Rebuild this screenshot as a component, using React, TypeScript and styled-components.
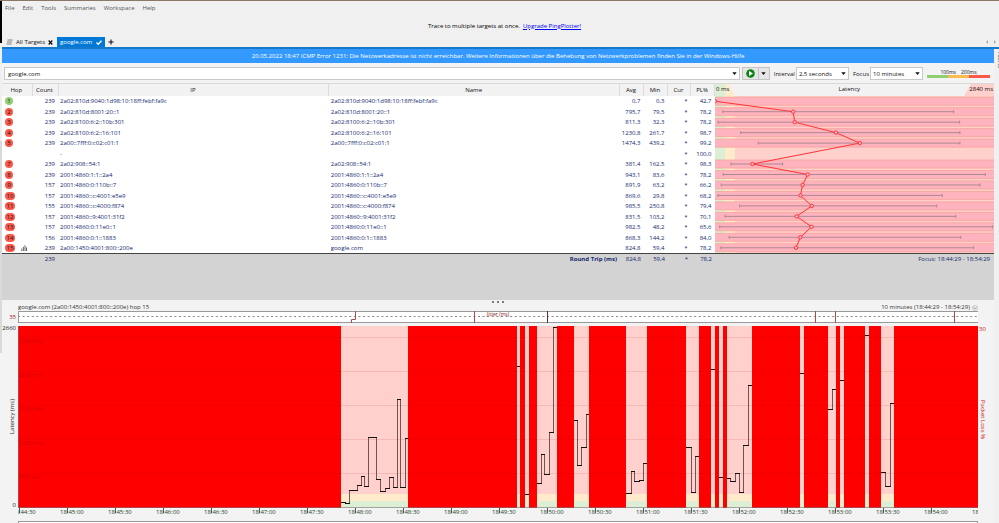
import React from "react";
import styled, { createGlobalStyle } from "styled-components";

const GlobalStyle = createGlobalStyle`
  *, *::before, *::after { box-sizing: border-box; }
  html, body { margin: 0; padding: 0; }
  body {
    background: #f3f3f3;
    color: #111;
    font: 6px/8px "Open Sans", "Noto Sans", sans-serif;
    overflow: hidden;
  }
  button, input, select { font: inherit; color: inherit; margin: 0; }
`;

/* ---------- data ---------- */

type Hop = {
  hop: number;
  count?: number;
  ip: string;
  name: string;
  avg?: number;
  min?: number;
  max?: number;
  loss: number;
};

const hops: Hop[] = [
  { hop: 1, count: 239, ip: "2a02:810d:9040:1d98:10:18ff:febf:fa9c", name: "2a02:810d:9040:1d98:10:18ff:febf:fa9c", avg: 0.7, min: 0.3, loss: 42.7 },
  { hop: 2, count: 239, ip: "2a02:810d:8001:20::1", name: "2a02:810d:8001:20::1", avg: 795.7, min: 79.5, max: 2429, loss: 78.2 },
  { hop: 3, count: 239, ip: "2a02:8100:6:2::10b:301", name: "2a02:8100:6:2::10b:301", avg: 811.3, min: 32.3, max: 2490, loss: 78.2 },
  { hop: 4, count: 239, ip: "2a02:8100:6:2::16:101", name: "2a02:8100:6:2::16:101", avg: 1230.8, min: 261.7, max: 2493, loss: 98.7 },
  { hop: 5, count: 239, ip: "2a00::7fff:0:c02:c01:1", name: "2a00::7fff:0:c02:c01:1", avg: 1474.3, min: 439.2, max: 2493, loss: 99.2 },
  { hop: 6, ip: "-", name: "", loss: 100 },
  { hop: 7, count: 239, ip: "2a02:908::54:1", name: "2a02:908::54:1", avg: 381.4, min: 162.5, max: 688, loss: 98.3 },
  { hop: 8, count: 239, ip: "2001:4860:1:1::2a4", name: "2001:4860:1:1::2a4", avg: 943.1, min: 83.6, max: 2751, loss: 78.2 },
  { hop: 9, count: 157, ip: "2001:4860:0:110b::7", name: "2001:4860:0:110b::7", avg: 891.9, min: 63.2, max: 2697, loss: 66.2 },
  { hop: 10, count: 157, ip: "2001:4860::c:4001:e5e9", name: "2001:4860::c:4001:e5e9", avg: 869.6, min: 29.8, max: 2313, loss: 68.2 },
  { hop: 11, count: 155, ip: "2001:4860::c:4000:f874", name: "2001:4860::c:4000:f874", avg: 985.5, min: 250.8, max: 2256, loss: 79.4 },
  { hop: 12, count: 157, ip: "2001:4860::9:4001:31f2", name: "2001:4860::9:4001:31f2", avg: 831.5, min: 103.2, max: 2450, loss: 70.1 },
  { hop: 13, count: 157, ip: "2001:4860:0:11e0::1", name: "2001:4860:0:11e0::1", avg: 982.5, min: 48.2, max: 2826, loss: 65.6 },
  { hop: 14, count: 156, ip: "2001:4860:0:1::1883", name: "2001:4860:0:1::1883", avg: 868.3, min: 144.2, max: 2501, loss: 84.0 },
  { hop: 15, count: 239, ip: "2a00:1450:4001:800::200e", name: "google.com", avg: 824.8, min: 59.4, max: 2633, loss: 78.2 },
];

const fmt = (n?: number) => (n === undefined ? "" : n.toFixed(1).replace(".", ","));

/* Each run of answered pings: step starts [x, y], closed by the run's end x. */
const runs: { end: number; steps: [number, number][] }[] = [
  { end: 390, steps: [[323, 176], [327, 177], [331, 164], [339, 159], [343, 150], [346, 160], [350, 111], [358, 153], [362, 165], [367, 162], [371, 151], [375, 161], [379, 73], [382, 161], [387, 112]] },
  { end: 502, steps: [[499, 40]] },
  { end: 511, steps: [[507, 168]] },
  { end: 539, steps: [[519, 157], [523, 128], [526, 148], [531, 106], [535, 1]] },
  { end: 571, steps: [[556, 94], [559, 139], [563, 121], [568, 88]] },
  { end: 629, steps: [[608, 167], [613, 145], [616, 155], [621, 154], [625, 137]] },
  { end: 681, steps: [[668, 121], [673, 166], [677, 130]] },
  { end: 697, steps: [[693, 43]] },
  { end: 705, steps: [[701, 151]] },
  { end: 734, steps: [[709, 152], [712, 155], [717, 147], [721, 166], [725, 119], [730, 59]] },
  { end: 786, steps: [[782, 47]] },
  { end: 818, steps: [[810, 83], [814, 63]] },
  { end: 826, steps: [[822, 54]] },
  { end: 851, steps: [[847, 9]] },
  { end: 876, steps: [[863, 146], [867, 160], [872, 77]] },
];

const times = Array.from({ length: 21 }, (_, i) => {
  const s = 44 * 60 + 30 + i * 30;
  return `18:${Math.floor(s / 60)}:${s % 60 === 0 ? "00" : "30"}`;
});

/* ---------- frame ---------- */

const Shell = styled.div`
  display: flex;
  flex-direction: column;
  height: 100vh;
  border-top: 1px solid #8c7866;
`;
const Columns = styled.div`
  display: flex;
  flex: 1;
  min-height: 0;
`;
const LeftEdge = styled.div`
  width: 2px;
  flex: none;
  background: linear-gradient(#000 42px, #f0f0f0 42px 140px, #dadada 140px 352px, #f3f3f3 352px);
`;
const Main = styled.main`
  flex: 1;
  min-width: 0;
  display: flex;
  flex-direction: column;
`;

const MenuBar = styled.nav`
  display: flex;
  gap: 8px;
  height: 13px;
  padding-left: 3px;
  background: #f0f0f0;
`;
const MenuItem = styled.button`
  border: 0;
  padding: 0;
  background: none;
  color: #555;
`;
const Promo = styled.div`
  height: 23px;
  display: flex;
  align-items: center;
  justify-content: center;
  gap: 3px;
  padding-left: 8px;
  background: #f0f0f0;
  color: #000;
  a { color: #0000ff; text-decoration: underline; }
`;
const TabBar = styled.div`
  height: 10px;
  display: flex;
  align-items: stretch;
  padding-left: 1px;
  background: #f0f0f0;
`;
const Tab = styled.button<{ $active?: boolean }>`
  display: flex;
  align-items: center;
  gap: ${(p) => (p.$active ? "4px" : "3px")};
  border: 0;
  padding: 0 ${(p) => (p.$active ? "3px" : "4px")} 0 3px;
  white-space: nowrap;
  background: ${(p) => (p.$active ? "#0078d7" : "transparent")};
  color: ${(p) => (p.$active ? "#fff" : "#111")};
`;
const IconButton = styled.button`
  border: 0;
  padding: 0;
  background: none;
  display: flex;
  align-items: center;
  justify-content: center;
  color: #111;
  width: 12px;
`;
const TabScroll = styled.div`
  margin-left: auto;
  display: flex;
  button { width: 8px; color: #aaa; }
`;
const Work = styled.div`
  display: flex;
  flex: 1;
  min-height: 0;
  border-top: 2px solid #1777c9;
`;
const Content = styled.div`
  flex: 1;
  min-width: 0;
  display: flex;
  flex-direction: column;
`;
const RightEdge = styled.aside`
  width: 5px;
  flex: none;
  padding: 3px 0 0 2px;
  overflow: hidden;
  background: #f0f0f0;
`;
const SideTab = styled.button`
  border: 0;
  padding: 0;
  background: none;
  writing-mode: vertical-rl;
  color: #333;
`;
const Banner = styled.div`
  height: 14px;
  line-height: 14px;
  text-align: center;
  white-space: nowrap;
  background: #3399ff;
  color: #fff;
`;

/* ---------- toolbar ---------- */

const Toolbar = styled.div`
  height: 21px;
  display: flex;
  align-items: center;
  padding: 1px 4px 0 2px;
  border-bottom: 1px solid #d8d8d8;
  background: #f3f3f3;
`;
const Combo = styled.div<{ $grow?: boolean }>`
  position: relative;
  flex: ${(p) => (p.$grow ? "1" : "none")};
  width: 53px;
  height: 13px;
  input, select {
    appearance: none;
    width: 100%;
    height: 100%;
    border: 1px solid #c8c8c8;
    border-radius: 0;
    background: #fff;
    padding: 0 3px;
    outline: none;
    display: block;
    color: #111;
  }
  select { padding: 0 2px; }
`;
const ComboArrow = styled.span`
  position: absolute;
  right: 3px;
  top: 0;
  bottom: 0;
  display: flex;
  align-items: center;
  pointer-events: none;
`;
const SplitButton = styled.div`
  display: flex;
  height: 13px;
  margin: 0 4px 0 2px;
  border: 1px solid #c4c4c4;
  background: #e6e6e6;
  button + button { border-left: 1px solid #c4c4c4; width: 11px; }
  button { width: 15px; }
`;
const FieldLabel = styled.label`
  margin: 0 1px 0 0;
  ${Combo} + & { margin-left: 4px; }
`;
const Legend = styled.div`
  width: 63px;
  margin-left: 4px;
  line-height: 6px;
`;
const LegendLabels = styled.div`
  display: flex;
  justify-content: center;
  gap: 5px;
  font-size: 5px;
`;
const LegendBar = styled.div`
  height: 3px;
  background: linear-gradient(90deg, #8fcf70 33%, #fdbb4e 33% 67%, #fb5849 67%);
`;

/* ---------- trace table ---------- */

const Trace = styled.section`
  display: grid;
  grid-template-columns: 713fr 279fr;
  background: #fff;
`;
const HopTable = styled.table`
  width: 100%;
  border-collapse: collapse;
  table-layout: fixed;
  color: #14286e;
  th, td {
    padding: 0 3px 0 2px;
    line-height: 8px;
    white-space: nowrap;
    overflow: hidden;
  }
  thead tr { height: 12px; background: #f2f2f2; }
  thead th { font-weight: 400; color: #111; border-right: 1px solid #dcdcdc; }
`;
const Col = styled.col<{ $w?: string }>`
  width: ${(p) => p.$w ?? "auto"};
`;
const BodyRow = styled.tr<{ $tall?: boolean }>`
  height: ${(p) => (p.$tall ? "11px" : "10px")};
`;
const Num = styled.td`
  text-align: right;
`;
const RoundTrip = styled.th`
  text-align: right;
  font-weight: 700;
`;
const HopCell = styled.div`
  display: flex;
  align-items: center;
  gap: 6px;
  height: 10px;
  padding-left: 1px;
`;
const Badge = styled.span<{ $good: boolean; $wide: boolean }>`
  width: ${(p) => (p.$wide ? "10px" : "8px")};
  height: 8px;
  border-radius: 4px;
  text-align: center;
  background: ${(p) => (p.$good ? "#8fcf70" : "#fb5849")};
  color: #10132e;
`;
const LatencyPane = styled.div`
  display: flex;
  flex-direction: column;
  min-width: 0;
`;
const LatencyHead = styled.div`
  position: relative;
  height: 12px;
  display: flex;
  justify-content: space-between;
  padding: 1px 1px 0;
  background: #f2f2f2;
  line-height: 8px;
  span { position: relative; }
`;
const HeadShape = styled.svg<{ $right?: boolean }>`
  position: absolute;
  top: 0;
  ${(p) => (p.$right ? "right: 0;" : "left: 0;")}
`;
const LatencySvg = styled.svg`
  display: block;
  width: 100%;
  height: 157px;
`;
const Summary = styled.div`
  height: 47px;
  border-top: 1px solid #444;
  background: #d3d3d3;
  color: #14286e;
  display: grid;
  grid-template-columns: 713fr 279fr;
  align-items: start;
`;
const FocusRange = styled.div`
  text-align: right;
  line-height: 10px;
  padding-right: 4px;
`;

/* ---------- timeline ---------- */

const Splitter = styled.div`
  height: 4px;
  display: flex;
  align-items: center;
  justify-content: center;
  gap: 3px;
  i { width: 2px; height: 2px; background: #555; border-radius: 1px; }
`;
const Timeline = styled.section`
  display: grid;
  grid-template-columns: 16px minmax(0, 1fr) 16px;
  grid-template-rows: 7px 12px 3px 182px 9px;
`;
const TitleRow = styled.div`
  grid-column: 2;
  display: flex;
  justify-content: space-between;
  align-items: center;
  line-height: 7px;
  color: #333;
`;
const Period = styled.button`
  border: 0;
  padding: 0;
  background: none;
  display: flex;
  align-items: center;
  gap: 2px;
  line-height: 7px;
`;
const JitterScale = styled.div`
  grid-column: 1;
  grid-row: 2;
  text-align: right;
  padding: 2px 2px 0 0;
  color: #a01818;
`;
const Jitter = styled.div`
  grid-column: 2;
  grid-row: 2;
  position: relative;
  background: #fff;
  svg { display: block; width: 100%; height: 12px; }
`;
const JitterLabel = styled.span`
  position: absolute;
  left: 0;
  right: 0;
  top: 0;
  text-align: center;
  line-height: 7px;
  font-size: 5px;
  color: #881111;
`;
const LatencyScale = styled.div`
  grid-column: 1;
  grid-row: 4;
  display: flex;
  flex-direction: column;
  justify-content: space-between;
  align-items: flex-end;
  padding-right: 2px;
  line-height: 5px;
  color: #222;
`;
const AxisTitle = styled.span<{ $up?: boolean }>`
  writing-mode: vertical-rl;
  line-height: 8px;
  white-space: nowrap;
  ${(p) => p.$up && "transform: rotate(180deg);"}
`;
const LossScale = styled.div`
  grid-column: 3;
  grid-row: 4;
  display: flex;
  flex-direction: column;
  justify-content: space-between;
  align-items: flex-start;
  padding-left: 1px;
  line-height: 6px;
  color: #d01010;
  &::after { content: ""; }
`;
const Plot = styled.div`
  grid-column: 2;
  grid-row: 4;
  position: relative;
  svg { display: block; width: 100%; height: 182px; }
`;
const GridLabels = styled.div`
  position: absolute;
  inset: 11px auto auto 1px;
  display: grid;
  grid-auto-rows: 34px;
  color: #d40000;
`;
const TimeAxis = styled.div`
  grid-column: 2;
  grid-row: 5;
  overflow: hidden;
`;
const TimeLabels = styled.div`
  display: flex;
  margin-left: -6px;
  margin-right: 6px;
`;
const TimeLabel = styled.time`
  flex: 0 0 5%;
  position: relative;
  line-height: 8px;
  color: #1f3f26;
  &::before {
    content: "";
    position: absolute;
    left: 7px;
    top: 0;
    height: 5px;
    border-left: 1px solid #555;
  }
`;
const NextPanel = styled.div`
  flex: 1;
  margin: 4px 16px 0;
  border: 1px solid #999;
  border-bottom: 0;
  background: #fff;
`;

/* ---------- parts ---------- */

const Caret = () => (
  <svg width="5" height="3" viewBox="0 0 5 3" aria-hidden="true">
    <path d="M0.3 0.2h4.4L2.5 3z" fill="#111" />
  </svg>
);

const columns = (
  <colgroup>
    <Col $w="30px" />
    <Col $w="26px" />
    <Col $w="38%" />
    <Col />
    <Col $w="24px" />
    <Col $w="24px" />
    <Col $w="23px" />
    <Col $w="24px" />
  </colgroup>
);

function Hops() {
  return (
    <HopTable>
      {columns}
      <thead>
        <tr>
          {["Hop", "Count", "IP", "Name", "Avg", "Min", "Cur", "PL%"].map((h) => (
            <th key={h} scope="col">{h}</th>
          ))}
        </tr>
      </thead>
      <tbody>
        {hops.map((h, i) => (
          <BodyRow key={h.hop} $tall={i % 2 === 1}>
            <td>
              {h.count !== undefined && (
                <HopCell>
                  <Badge $good={h.hop === 1} $wide={h.hop > 9}>{h.hop}</Badge>
                  {h.hop === 15 && (
                    <svg width="6" height="6" viewBox="0 0 6 6" aria-hidden="true">
                      <path d="M0.8 6V3.6M2.4 6V1.8M4 6V0.3M5.5 6V2.4" stroke="#555" strokeWidth="0.9" />
                    </svg>
                  )}
                </HopCell>
              )}
            </td>
            <Num>{h.count}</Num>
            <td>{h.ip}</td>
            <td>{h.name}</td>
            <Num>{fmt(h.avg)}</Num>
            <Num>{fmt(h.min)}</Num>
            <Num>*</Num>
            <Num>{fmt(h.loss)}</Num>
          </BodyRow>
        ))}
      </tbody>
    </HopTable>
  );
}

const msX = (ms: number) => (ms / 2840) * 279;
const rowY = (i: number) => ((i + 0.5) * 157) / 15;

function LatencyGraph() {
  const answered = hops.map((h, i) => ({ h, y: rowY(i) })).filter(({ h }) => h.avg !== undefined);
  return (
    <LatencyPane>
      <LatencyHead>
        <HeadShape width="20" height="12" viewBox="0 0 20 12" aria-hidden="true">
          <path d="M0 0H10V12H0z" fill="#dcefd4" />
          <path d="M10 0H13L20 12H10z" fill="#ffeacb" />
        </HeadShape>
        <HeadShape $right width="30" height="12" viewBox="0 0 30 12" aria-hidden="true">
          <path d="M7 0H30V12H0z" fill="#ffd0cc" />
        </HeadShape>
        <span>0 ms</span>
        <span>Latency</span>
        <span>2840 ms</span>
      </LatencyHead>
      <LatencySvg viewBox="0 0 279 157" preserveAspectRatio="none" role="img" aria-label="Latency per hop">
        <rect width="279" height="157" fill="#ffd0cc" />
        <rect width="10" height="157" fill="#dcefd4" />
        <rect x="10" width="10" height="157" fill="#ffeacb" />
        {answered.map(({ h, y }) => (
          <g key={h.hop}>
            <rect y={y - 4} width="279" height="8" fill="#ffb3bf" />
            <path d={`M0 ${y - 4}H279M0 ${y + 4}H279`} stroke="#f5a397" strokeWidth="0.8" />
            {h.max !== undefined && (
              <path
                d={`M${msX(h.min!)} ${y}H${msX(h.max)}M${msX(h.min!)} ${y - 1.5}v3M${msX(h.max)} ${y - 1.5}v3`}
                stroke="#9b7d83"
                strokeWidth="0.8"
              />
            )}
          </g>
        ))}
        <polyline
          points={answered.map(({ h, y }) => `${msX(h.avg!)},${y}`).join(" ")}
          fill="none"
          stroke="#ff3434"
          strokeWidth="1"
        />
        {answered.map(({ h, y }) => (
          <circle key={h.hop} cx={msX(h.avg!)} cy={y} r="1.7" fill="#ffb3bf" stroke="#ff2a2a" strokeWidth="0.9" />
        ))}
      </LatencySvg>
    </LatencyPane>
  );
}

function SummaryRow() {
  return (
    <Summary>
      <HopTable>
        {columns}
        <tbody>
          <BodyRow>
            <td />
            <Num>239</Num>
            <td />
            <RoundTrip scope="row">Round Trip (ms)</RoundTrip>
            <Num>824,8</Num>
            <Num>59,4</Num>
            <Num>*</Num>
            <Num>78,2</Num>
          </BodyRow>
        </tbody>
      </HopTable>
      <FocusRange>Focus: 18:44:29 - 18:54:29</FocusRange>
    </Summary>
  );
}

function LatencyPlot() {
  const flats = runs
    .map(({ end, steps }) =>
      steps.map(([x, y], i) => `M${x} ${y + 0.5}H${i + 1 < steps.length ? steps[i + 1][0] + 1 : end}`).join("")
    )
    .join("");
  const rises = runs
    .map(({ steps }) => steps.slice(1).map(([x, y], i) => `M${x + 0.5} ${steps[i][1]}V${y + 1}`).join(""))
    .join("");
  return (
    <svg viewBox="0 0 960 182" preserveAspectRatio="none" role="img" aria-label="Latency and packet loss over time">
      <rect width="960" height="182" fill="#ff0000" />
      {runs.map(({ end, steps }) => {
        const x = steps[0][0];
        return (
          <g key={x}>
            <rect x={x} width={end - x} height="168" fill="#ffd0cc" />
            <rect x={x} y="168" width={end - x} height="7" fill="#ffeacb" />
            <rect x={x} y="175" width={end - x} height="7" fill="#dcefd4" />
          </g>
        );
      })}
      <path d="M0 11.5H960M0 45.5H960M0 79.5H960M0 113.5H960M0 147.5H960" stroke="#900000" strokeOpacity="0.1" />
      <path d={rises} stroke="#6e5654" />
      <path d={flats} stroke="#111" />
      <path d="M0 181.5H960M0.5 0V182" stroke="#777" strokeOpacity="0.6" />
    </svg>
  );
}

export default function App() {
  return (
    <>
      <GlobalStyle />
      <Shell>
        <Columns>
          <LeftEdge />
          <Main>
            <MenuBar>
              {["File", "Edit", "Tools", "Summaries", "Workspace", "Help"].map((m) => (
                <MenuItem key={m}>{m}</MenuItem>
              ))}
            </MenuBar>
            <Promo>
              Trace to multiple targets at once. <a href="#upgrade">Upgrade PingPlotter!</a>
            </Promo>
            <TabBar>
              <Tab>
                <svg width="7" height="6" viewBox="0 0 7 6" aria-hidden="true">
                  <path d="M1.5 1H6.6M1 3H6.1M0.4 5H5.6" stroke="#777" strokeWidth="0.9" />
                </svg>
                All Targets
                <svg width="5" height="5" viewBox="0 0 5 5" aria-label="Close">
                  <path d="M0.7 0.5L4.3 4.5M4.3 0.5L0.7 4.5" stroke="#111" strokeWidth="1.3" />
                </svg>
              </Tab>
              <Tab $active>
                google.com
                <svg width="6" height="5" viewBox="0 0 6 5" aria-hidden="true">
                  <path d="M0.5 2.6L2.2 4.2L5.5 0.7" fill="none" stroke="#fff" strokeWidth="1.4" />
                </svg>
              </Tab>
              <IconButton aria-label="New tab">
                <svg width="6" height="6" viewBox="0 0 6 6">
                  <path d="M3 0.4V5.6M0.4 3H5.6" stroke="currentColor" strokeWidth="1.1" />
                </svg>
              </IconButton>
              <TabScroll>
                <IconButton aria-label="Previous tabs">
                  <svg width="2" height="4" viewBox="0 0 2 4"><path d="M2 0V4L0 2z" fill="currentColor" /></svg>
                </IconButton>
                <IconButton aria-label="Next tabs">
                  <svg width="2" height="4" viewBox="0 0 2 4"><path d="M0 0V4L2 2z" fill="currentColor" /></svg>
                </IconButton>
              </TabScroll>
            </TabBar>
            <Work>
              <Content>
                <Banner role="alert">
                  20.05.2022 18:47 ICMP Error 1231: Die Netzwerkadresse ist nicht erreichbar. Weitere Informationen über die
                  Behebung von Netzwerkproblemen finden Sie in der Windows-Hilfe
                </Banner>
                <Toolbar>
                  <Combo $grow>
                    <input aria-label="Target" defaultValue="google.com" />
                    <ComboArrow><Caret /></ComboArrow>
                  </Combo>
                  <SplitButton>
                    <IconButton aria-label="Start trace">
                      <svg width="9" height="9" viewBox="0 0 9 9">
                        <circle cx="4.5" cy="4.5" r="4.3" fill="#0c8216" />
                        <path d="M3 2.1L7 4.5L3 6.9z" fill="#fff" />
                      </svg>
                    </IconButton>
                    <IconButton aria-label="Trace options"><Caret /></IconButton>
                  </SplitButton>
                  <FieldLabel htmlFor="interval">Interval</FieldLabel>
                  <Combo>
                    <select id="interval"><option>2,5 seconds</option></select>
                    <ComboArrow><Caret /></ComboArrow>
                  </Combo>
                  <FieldLabel htmlFor="focus">Focus</FieldLabel>
                  <Combo>
                    <select id="focus"><option>10 minutes</option></select>
                    <ComboArrow><Caret /></ComboArrow>
                  </Combo>
                  <Legend>
                    <LegendLabels><span>100ms</span><span>200ms</span></LegendLabels>
                    <LegendBar />
                  </Legend>
                </Toolbar>
                <Trace>
                  <Hops />
                  <LatencyGraph />
                </Trace>
                <SummaryRow />
                <Splitter><i /><i /><i /></Splitter>
                <Timeline>
                  <TitleRow>
                    <span>google.com (2a00:1450:4001:800::200e) hop 15</span>
                    <Period>
                      10 minutes (18:44:29 - 18:54:29)
                      <svg width="6" height="6" viewBox="0 0 6 6" aria-hidden="true">
                        <circle cx="3" cy="3" r="2.5" fill="none" stroke="#aaa" strokeWidth="0.6" />
                        <path d="M1.7 2.4L3 3.8L4.3 2.4" fill="none" stroke="#777" strokeWidth="0.8" />
                      </svg>
                    </Period>
                  </TitleRow>
                  <JitterScale>35</JitterScale>
                  <Jitter>
                    <svg viewBox="0 0 960 12" preserveAspectRatio="none" aria-hidden="true">
                      <path d="M0 5.5H960" stroke="#888" strokeDasharray="2 2.6" />
                      <path d="M0 0.5H960M0 11.5H960M0.5 0V12" stroke="#999" />
                      <path d="M337.5 0V8.5H333.5V12M456.5 0V12M797.5 0V12M817.5 0V12M936.5 0V12" fill="none" stroke="#b04a4a" />
                      <path d="M529.5 0V12" stroke="#5a3030" />
                    </svg>
                    <JitterLabel>Jitter (ms)</JitterLabel>
                  </Jitter>
                  <LatencyScale>
                    <span>2660</span>
                    <AxisTitle $up>Latency (ms)</AxisTitle>
                    <span>0</span>
                  </LatencyScale>
                  <Plot>
                    <LatencyPlot />
                    <GridLabels>
                      {[2500, 2000, 1500, 1000, 500].map((v) => <span key={v}>{v} ms</span>)}
                    </GridLabels>
                  </Plot>
                  <LossScale>
                    <span>30</span>
                    <AxisTitle>Packet Loss %</AxisTitle>
                  </LossScale>
                  <TimeAxis>
                    <TimeLabels>
                      {times.map((t) => <TimeLabel key={t}>{t}</TimeLabel>)}
                    </TimeLabels>
                  </TimeAxis>
                </Timeline>
                <NextPanel />
              </Content>
              <RightEdge><SideTab>Alerts</SideTab></RightEdge>
            </Work>
          </Main>
        </Columns>
      </Shell>
    </>
  );
}
